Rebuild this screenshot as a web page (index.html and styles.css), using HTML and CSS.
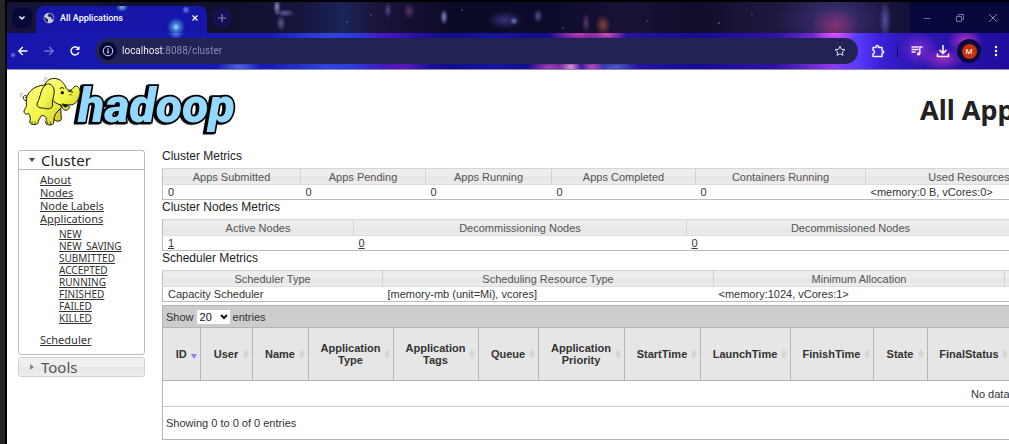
FILE: index.html
```html
<!DOCTYPE html>
<html lang="en">
<head>
<meta charset="utf-8">
<title>All Applications</title>
<link rel="stylesheet" href="styles.css">
</head>
<body>
<div class="window">
  <header class="chrome">
    <div class="tabstrip">
      <button class="tab-search" aria-label="Search tabs"><svg width="8" height="8" viewBox="0 0 8 8"><path d="M1.500 2.500 4 5 6.500 2.500" fill="none" stroke="#fff" stroke-width="1.500"/></svg></button>
      <div class="tab">
        <svg width="12" height="12" viewBox="0 0 12 12"><circle cx="6" cy="6" r="5.300" fill="#c8ccd6"/><path d="M1.300 4.500 3.500 6.500 5 7v3.600C2.500 10 1 8 1.300 4.500ZM6 1.300 4.500 3.500 6 5h2l.5 2L10.500 8C11.500 5 10 2 6 1.300Z" fill="#25287a"/></svg>
        <span class="tab-title">All Applications</span>
        <button class="tab-close" aria-label="Close tab"><svg width="8" height="8" viewBox="0 0 8 8"><path d="M1.500 1.500l5 5M6.500 1.500l-5 5" stroke="#fff" stroke-width="1.200"/></svg></button>
      </div>
      <button class="new-tab" aria-label="New tab"><svg width="10" height="10" viewBox="0 0 10 10"><path d="M5 1v8M1 5h8" stroke="#8583b4" stroke-width="1.200"/></svg></button>
      <div class="win-controls">
        <button aria-label="Minimize"><svg width="10" height="10" viewBox="0 0 10 10"><path d="M1.500 5.500h7" stroke="#656596"/></svg></button>
        <button aria-label="Restore"><svg width="10" height="10" viewBox="0 0 10 10"><path d="M1.500 3.500h5v5h-5zM3.500 3.500v-2h5v5h-2" fill="none" stroke="#77769f"/></svg></button>
        <button aria-label="Close"><svg width="10" height="10" viewBox="0 0 10 10"><path d="M1 1l8 8M9 1l-8 8" stroke="#8584ad"/></svg></button>
      </div>
    </div>
    <div class="toolbar">
      <button aria-label="Back"><svg width="12" height="12" viewBox="0 0 12 12"><path d="M10.500 6H2M5.800 2 1.800 6l4 4" fill="none" stroke="#fff" stroke-width="1.400"/></svg></button>
      <button aria-label="Forward"><svg width="12" height="12" viewBox="0 0 12 12"><path d="M1.500 6H10M6.200 2l4 4-4 4" fill="none" stroke="#7575cc" stroke-width="1.300"/></svg></button>
      <button aria-label="Reload"><svg width="12" height="12" viewBox="0 0 12 12"><path d="M9.800 7.200A4 4 0 1 1 9 3.200L10 4.200" fill="none" stroke="#fff" stroke-width="1.500"/><path d="M10.500 1v4h-4z" fill="#fff"/></svg></button>
      <div class="omnibox">
        <button class="site-info" aria-label="View site information"><svg width="12" height="12" viewBox="0 0 12 12"><circle cx="6" cy="6" r="4.800" fill="none" stroke="#dcdcf0"/><path d="M6 5.300v3.300M6 3.200v1.200" stroke="#fff" stroke-width="1.200"/></svg></button>
        <input class="url" type="text" aria-label="Address" value="localhost:8088/cluster">
        <button class="star" aria-label="Bookmark this tab"><svg width="12" height="12" viewBox="0 0 12 12"><path d="M6 1.200 7.400 4.300l3.500.4-2.600 2.300.7 3.400L6 8.700 3 10.400 3.700 7 1.100 4.700l3.500-.4z" fill="none" stroke="#d8d8ea"/></svg></button>
      </div>
      <div class="actions">
        <button aria-label="Extensions"><svg width="14" height="14" viewBox="0 0 14 14"><path d="M2 3.500h3V2.800a1.300 1.300 0 0 1 2.600 0v.7H11v3.200h.5a1.200 1.200 0 0 1 0 2.400H11v3.400H2V9.800c2-.2 2-3.400 0-3.600z" fill="none" stroke="#f2f0ff" stroke-width="1.500" stroke-linejoin="round"/></svg></button>
        <span class="divider"></span>
        <button aria-label="Media controls"><svg width="14" height="14" viewBox="0 0 14 14"><path d="M1.500 3h7M1.500 5.500h7M1.500 8h4M9.800 10V3H12.500" fill="none" stroke="#f2f0ff" stroke-width="1.400"/><circle cx="8.600" cy="9.900" r="1.700" fill="#f2f0ff"/></svg></button>
        <button aria-label="Downloads"><svg width="14" height="14" viewBox="0 0 14 14"><path d="M7 1v8M3.500 6 7 9.300 10.500 6M1.500 9.500v3h11v-3" fill="none" stroke="#f8f6ff" stroke-width="1.600"/></svg></button>
        <button class="profile" aria-label="Profile"><span class="avatar">M</span></button>
        <button aria-label="Menu"><svg width="4" height="14" viewBox="0 0 4 14"><circle cx="2" cy="3" r="1.200" fill="#fff"/><circle cx="2" cy="7" r="1.200" fill="#fff"/><circle cx="2" cy="11" r="1.200" fill="#fff"/></svg></button>
      </div>
    </div>
  </header>

  <div class="page">
    <div class="banner">
      <svg class="logo" width="240" height="70" viewBox="0 0 720 210" role="img" aria-label="hadoop">
        <defs><linearGradient id="skin" x1="0" y1="0" x2="1" y2="1"><stop offset="0" stop-color="#ffff84"/><stop offset=".6" stop-color="#f2f548"/><stop offset="1" stop-color="#c8c42a"/></linearGradient></defs>
        <text class="logo-text" x="204" y="152">hadoop</text>
        <g fill="url(#skin)" stroke="#1c1c08" stroke-width="3" stroke-linejoin="round" stroke-linecap="round">
          <path d="M50 90C38 88 36 76 44 74C52 72 54 79 46 80" fill="none"/>
          <path d="M124 112L132 146C138 152 150 152 154 146L152 112Z" fill="#d8d22a"/>
          <path d="M102 42C72 44 46 66 49 94C52 108 44 112 42 120C42 130 50 130 56 128C62 136 62 144 59 154C64 163 80 162 84 157C84 148 90 142 94 134C98 132 104 134 108 140C110 146 108 152 106 156C112 164 128 163 131 157C130 146 134 134 138 126L154 110L140 50Z"/>
          <path d="M104 44C108 18 144 16 158 34C166 42 168 56 178 58C188 60 188 46 199 45C210 48 213 62 208 76C202 96 190 104 176 101C180 110 176 118 166 118C158 116 156 110 154 102C142 100 132 94 126 86Z"/>
          <path d="M106 42C92 52 92 78 82 96C78 104 86 112 98 111C114 116 128 114 128 102C124 86 136 72 132 54C128 40 114 34 106 42Z"/>
          <path d="M150 52q6-6 12 0M174 60l10 3M182 56l6 8" fill="none"/>
          <path d="M157 100q8 16 17 3z" fill="#111"/>
          <ellipse cx="157" cy="65" rx="5" ry="5" fill="#111" stroke="none"/>
          <path d="M178 72q4-6 8 0M66 151v8M112 152v8M121 153v8M75 152v8" fill="none" stroke-width="2"/>
          <path d="M100 30q4-8 14-8M103 21l5-4M32 78q0-8 7-12M30 70l3-4" fill="none" stroke="#888" stroke-width="2"/>
        </g>
      </svg>
      <h1>All Applications</h1>
    </div>

    <div class="layout">
      <nav class="sidebar">
        <section class="panel">
          <h3 class="open"><svg width="6" height="4" viewBox="0 0 6 4"><path d="M0 0h6L3 4z" fill="#444"/></svg>Cluster</h3>
          <ul class="links">
            <li><a href="#">About</a></li>
            <li><a href="#">Nodes</a></li>
            <li><a href="#">Node Labels</a></li>
            <li><a href="#">Applications</a>
              <ul>
                <li><a href="#">NEW</a></li>
                <li><a href="#">NEW_SAVING</a></li>
                <li><a href="#">SUBMITTED</a></li>
                <li><a href="#">ACCEPTED</a></li>
                <li><a href="#">RUNNING</a></li>
                <li><a href="#">FINISHED</a></li>
                <li><a href="#">FAILED</a></li>
                <li><a href="#">KILLED</a></li>
              </ul>
            </li>
            <li><a href="#">Scheduler</a></li>
          </ul>
        </section>
        <section class="panel shut">
          <h3><svg width="6" height="6" viewBox="0 0 6 6"><path d="M1 0v6l4-3z" fill="#888"/></svg>Tools</h3>
        </section>
      </nav>

      <main class="content">
        <h2>Cluster Metrics</h2>
        <table class="metrics apps">
          <colgroup><col><col><col><col><col><col><col></colgroup>
          <thead><tr><th>Apps Submitted</th><th>Apps Pending</th><th>Apps Running</th><th>Apps Completed</th><th>Containers Running</th><th>Used Resources</th><th></th></tr></thead>
          <tbody><tr><td>0</td><td>0</td><td>0</td><td>0</td><td>0</td><td>&lt;memory:0 B, vCores:0&gt;</td><td></td></tr></tbody>
        </table>
        <h2>Cluster Nodes Metrics</h2>
        <table class="metrics nodes">
          <colgroup><col><col><col><col></colgroup>
          <thead><tr><th>Active Nodes</th><th>Decommissioning Nodes</th><th>Decommissioned Nodes</th><th></th></tr></thead>
          <tbody><tr><td><a href="#">1</a></td><td><a href="#">0</a></td><td><a href="#">0</a></td><td></td></tr></tbody>
        </table>
        <h2>Scheduler Metrics</h2>
        <table class="metrics sched">
          <colgroup><col><col><col><col></colgroup>
          <thead><tr><th>Scheduler Type</th><th>Scheduling Resource Type</th><th>Minimum Allocation</th><th></th></tr></thead>
          <tbody><tr><td>Capacity Scheduler</td><td>[memory-mb (unit=Mi), vcores]</td><td>&lt;memory:1024, vCores:1&gt;</td><td></td></tr></tbody>
        </table>

        <div class="datatable">
          <div class="length">
            <label for="len">Show</label>
            <span class="select"><select id="len"><option>20</option><option>40</option></select><svg width="8" height="6" viewBox="0 0 8 6"><path d="M1 1l3 3 3-3" fill="none" stroke="#111" stroke-width="2"/></svg></span>
            <span>entries</span>
          </div>
          <table class="list">
            <colgroup><col><col><col><col><col><col><col><col><col><col><col><col><col></colgroup>
            <thead><tr>
              <th class="desc">ID</th><th>User</th><th>Name</th><th>Application Type</th><th>Application Tags</th><th>Queue</th><th>Application Priority</th><th>StartTime</th><th>LaunchTime</th><th>FinishTime</th><th>State</th><th>FinalStatus</th><th></th>
            </tr></thead>
            <tbody><tr><td colspan="13">No data available in table</td></tr></tbody>
          </table>
          <div class="info">Showing 0 to 0 of 0 entries</div>
        </div>
      </main>
    </div>
  </div>
</div>
</body>
</html>
```
FILE: styles.css
```css
* { box-sizing: border-box; }
body {
  margin: 0;
  overflow: hidden;
  background: #000;
  font-family: "Liberation Sans", Arial, sans-serif;
  font-size: 11px;
  color: #333;
}
button { border: 0; padding: 0; background: none; color: inherit; display: flex; align-items: center; justify-content: center; }
svg { display: block; flex: none; }

.window {
  min-height: 100vh;
  padding: 2px 0 0 2px;
  border-left: 5px solid #262626;
  background: #000;
}

/* Browser frame */
.chrome { overflow: hidden; border-bottom: 1px solid #8d87b8; }
.tabstrip {
  display: flex;
  align-items: center;
  height: 31px;
  padding-left: 5px;
  background:
    radial-gradient(4px 9px at 270px 5px, #8a86c8, transparent),
    radial-gradient(10px 4px at 278px 11px, #5f5b9c, transparent),
    radial-gradient(5px 8px at 274px 21px, #5a5690, transparent),
    radial-gradient(4px 8px at 437px 15px, #8088c8, transparent),
    radial-gradient(4px 8px at 381px 8px, #4c4a90, transparent),
    radial-gradient(6px 8px at 402px 9px, #5c3066, transparent),
    radial-gradient(4px 4px at 507px 19px, #6a78c8, transparent),
    radial-gradient(18px 9px at 498px 18px, #38307a, transparent),
    radial-gradient(5px 7px at 531px 14px, #4c4f8c, transparent),
    radial-gradient(8px 10px at 596px 23px, #804238, transparent),
    radial-gradient(4px 10px at 579px 21px, #5a3470, transparent),
    radial-gradient(24px 18px at 828px 24px, #80306e, transparent),
    radial-gradient(60px 40px at 828px 18px, #42327a, transparent),
    radial-gradient(6px 20px at 878px 18px, #5058a0, transparent),
    radial-gradient(1px 1px at 340px 20px, #9a98c8, transparent),
    radial-gradient(1px 1px at 364px 13px, #8a88b8, transparent),
    radial-gradient(1px 1px at 455px 8px, #8a88b8, transparent),
    radial-gradient(1px 1px at 556px 26px, #8a88b8, transparent),
    radial-gradient(1px 1px at 640px 19px, #8a88b8, transparent),
    radial-gradient(1px 1px at 712px 21px, #b0aed8, transparent),
    radial-gradient(1px 1px at 745px 12px, #8a88b8, transparent),
    linear-gradient(90deg, #15133a 0, #11102c 220px, #15143a 290px, #1a2358 335px, #1a1238 375px, #0b0b25 450px, #0d0c2a 550px, #1a1236 620px, #0f0d27 690px, #20173e 760px, #15123a 900px);
}
.tab-search { width: 20px; height: 20px; border-radius: 7px; background: #06073a; }
.tab {
  display: flex;
  align-items: center;
  align-self: flex-end;
  width: 171px;
  height: 27px;
  margin-left: 4px;
  padding: 0 8px 4px 7px;
  border-radius: 8px 8px 0 0;
  color: #fff;
  background:
    radial-gradient(9px 9px at 140px 21px, #a8e8f8, #3f7cd8 40%, transparent),
    radial-gradient(4px 4px at 150px 4px, #6a88e8, transparent),
    radial-gradient(6px 5px at 86px 1px, #6ac0e8, transparent),
    #1617a8;
}
.tab-title { flex: 1; margin-left: 5px; font: 500 9px/12px Roboto, sans-serif; }
.tab-close { width: 8px; height: 12px; }
.new-tab { width: 20px; height: 20px; margin-left: 5px; border-radius: 50%; background: #170f56; }
.win-controls { display: flex; align-self: stretch; margin-left: auto; background: #06073a; }
.win-controls button { width: 33px; }

.toolbar {
  display: flex;
  align-items: center;
  height: 36px;
  padding: 0 11px 0 10px;
  background:
    radial-gradient(8px 6px at 169px 0, #5a90e4, transparent),
    radial-gradient(22px 8px at 232px 34px, #5068e0, transparent),
    radial-gradient(3px 3px at 6px 22px, #7090e8, transparent),
    radial-gradient(30px 8px at 572px 1px, #c03ca8, transparent),
    radial-gradient(20px 8px at 600px 1px, #d850b0, transparent),
    radial-gradient(24px 7px at 543px 34px, #b040b0, transparent),
    radial-gradient(12px 8px at 563px 34px, #f0a0d8, transparent),
    radial-gradient(12px 8px at 585px 34px, #c050b8, transparent),
    radial-gradient(24px 8px at 608px 34px, #4a60c8, transparent),
    radial-gradient(24px 9px at 396px 34px, #5a18c0, transparent),
    radial-gradient(22px 12px at 936px 26px, #9a28c0, transparent),
    radial-gradient(18px 14px at 958px 8px, #b030c8, transparent),
    radial-gradient(20px 18px at 912px 16px, #7a28d0, transparent),
    radial-gradient(22px 8px at 828px 1px, #e050ff, transparent),
    linear-gradient(90deg, #1616ac 0, #1719b4 260px, #3044dc 320px, #2c3cdc 345px, #4416bc 380px, #0e0d8c 440px, #1515a4 490px, #100c88 530px, #30129c 570px, #20149c 640px, #150c98 690px, #3012a4 770px, #9038e8 825px, #5a3cff 850px, #3a20d8 872px, #2c18b8 900px, #200c9c 1000px);
}
.toolbar > button { width: 12px; margin-right: 14px; }
.omnibox {
  display: flex;
  align-items: center;
  flex: 1;
  height: 26px;
  padding: 0 12px 0 4px;
  border-radius: 13px;
  background: #222355;
}
.site-info { width: 18px; height: 18px; border-radius: 50%; background: #05063a; }
.url {
  flex: 1;
  min-width: 0;
  border: 0;
  padding: 0 0 0 5px;
  outline: 0;
  font: 10px/14px Roboto, sans-serif;
  color: transparent;
  background: linear-gradient(90deg, #fff 46px, #8e8eb6 46px);
  -webkit-background-clip: text;
  background-clip: text;
}
.actions { display: flex; align-items: center; gap: 12px; margin-left: 13px; }
.divider { width: 1px; height: 13px; background: #120b58; }
.profile { width: 24px; height: 24px; margin: 0 1px 0 -5px; border-radius: 50%; background: #0b093c; }
.avatar { width: 15px; border-radius: 50%; background: #c5330c; color: #fff; font: 8px/15px Roboto, sans-serif; text-align: center; }

/* Page */
.page { overflow: hidden; min-height: calc(100vh - 70px); padding: 1px 0 4px 1px; background: #fff; }
.banner { display: grid; grid-template-columns: 910px max-content; align-items: center; height: 78px; padding-left: 2px; }
.logo { align-self: start; }
.logo-text {
  font: italic 900 145px Roboto, sans-serif;
  fill: #93d9ff;
  stroke: #000;
  stroke-width: 10px;
  stroke-linejoin: miter;
  paint-order: stroke;
  filter: drop-shadow(-6px 2px 0 #000);
}
h1 { margin: 0; font: 700 27px/36px "Noto Sans", sans-serif; color: #222; }
.layout { display: grid; grid-template-columns: 127px 1742px; gap: 17px; padding-left: 10px; }

.sidebar { padding-top: 1px; font-family: "Noto Sans", sans-serif; }
.panel { border: 1px solid #bbb; border-radius: 3px; }
.panel h3 { display: flex; align-items: center; gap: 6px; height: 19px; margin: 0; padding-left: 10px; border-bottom: 1px solid #bbb; font-weight: 400; font-size: 15px; line-height: 18px; color: #222; }
.panel.shut { margin-top: 2px; border-color: #d0d0d0; }
.panel.shut h3 { height: 18px; border: 0; color: #555; background: linear-gradient(#efefef 50%, #e6e6e6 50%, #ededed); }
.links { margin: 0; padding: 3px 0 8px 21px; list-style: none; font-size: 11px; line-height: 13px; }
.links ul { margin: 3px 0 9px; padding-left: 19px; list-style: none; font-size: 10px; line-height: 12px; }
a { color: #333; }

h2 { margin: 0 0 4px; font-weight: 400; font-size: 12px; line-height: 15px; color: #222; }
table { width: 100%; table-layout: fixed; border-collapse: collapse; }
.metrics { border: 1px solid #bbb; border-top-color: #d5d5d5; }
.metrics th { height: 16px; padding: 1px 0 0; border-right: 1px solid #d3d3d3; border-bottom: 1px solid #ddd; font-weight: 400; line-height: 14px; color: #555; background: linear-gradient(#ededed 50%, #e6e6e6 50%, #ececec); }
.metrics td { height: 15px; padding: 0 0 0 5px; line-height: 13px; }
.apps col:nth-child(1) { width: 138px; }
.apps col:nth-child(2) { width: 125px; }
.apps col:nth-child(3) { width: 126px; }
.apps col:nth-child(4) { width: 144px; }
.apps col:nth-child(5) { width: 170px; }
.apps col:nth-child(6) { width: 207px; }
.nodes col:nth-child(1) { width: 191px; }
.nodes col:nth-child(2) { width: 333px; }
.nodes col:nth-child(3) { width: 328px; }
.sched col:nth-child(1) { width: 220px; }
.sched col:nth-child(2) { width: 331px; }
.sched col:nth-child(3) { width: 291px; }

.datatable { margin-top: 3px; border: 1px solid #b5b5b5; }
.length { display: flex; align-items: center; gap: 3px; height: 21px; padding-left: 3px; background: #ccc; }
.select { position: relative; }
.select select { display: block; width: 33px; height: 14px; padding: 0 3px; border: 0; appearance: none; background: #fff; color: #111; font: 11px/14px "Liberation Sans", sans-serif; }
.select svg { position: absolute; right: 2px; top: 4px; pointer-events: none; }
.list th { position: relative; height: 53px; padding: 0 10px; border: 1px solid #b5b5b5; border-left: 0; line-height: 12px; background: #e6e6e6; }
.list th::before, .list th::after { content: ""; position: absolute; right: 3px; border: 3px solid transparent; }
.list th::before { bottom: 50%; border-top: 0; border-bottom: 5px solid #d6d6d6; }
.list th::after { top: 50%; border-bottom: 0; border-top: 5px solid #d6d6d6; }
.list th.desc::before { display: none; }
.list th.desc::after { border-top-color: #8484f4; }
.list td { height: 26px; padding: 0; border-bottom: 1px solid #ccc; text-align: center; }
.list col:nth-child(1) { width: 37px; }
.list col:nth-child(2) { width: 52px; }
.list col:nth-child(3) { width: 56px; }
.list col:nth-child(4), .list col:nth-child(5) { width: 85px; }
.list col:nth-child(6) { width: 60px; }
.list col:nth-child(7) { width: 86px; }
.list col:nth-child(8) { width: 76px; }
.list col:nth-child(9) { width: 90px; }
.list col:nth-child(10) { width: 83px; }
.list col:nth-child(11) { width: 54px; }
.list col:nth-child(12) { width: 84px; }
.info { padding: 9px 3px; line-height: 14px; }
```
